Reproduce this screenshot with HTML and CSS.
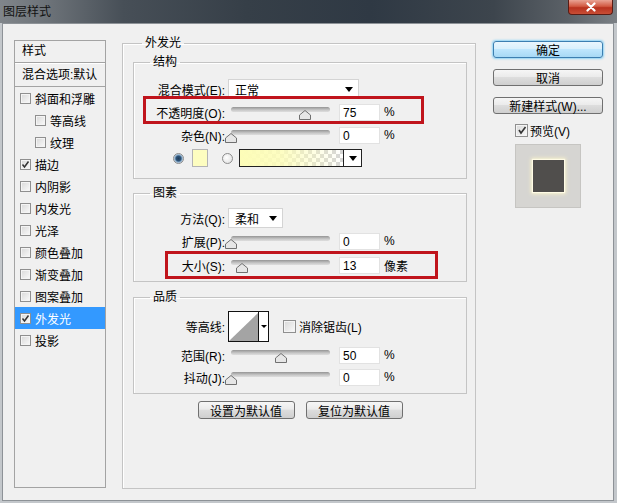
FILE: index.html
```html
<!DOCTYPE html>
<html>
  <head>
    <meta charset="UTF-8" />
    <title>图层样式</title>
    <link rel="stylesheet" href="styles.css">
  </head>
  <body>
    <div class="window">
      <div class="titlebar">
        <span class="title">图层样式</span>
        <div class="close">
          <svg width="14" height="10" viewBox="0 0 14 10"><path d="M3.5 1.5 L10.5 8.5 M10.5 1.5 L3.5 8.5" stroke="#fff" stroke-width="2.2" stroke-linecap="round"/></svg>
        </div>
      </div>
      <div class="client">
        <div class="stylelist">
          <div class="list-head">样式</div>
          <div class="list-head blend">混合选项:默认</div>
          <div class="item"><span class="cb"></span>斜面和浮雕</div>
          <div class="item sub"><span class="cb"></span>等高线</div>
          <div class="item sub"><span class="cb"></span>纹理</div>
          <div class="item"><span class="cb"><svg width="9" height="9" viewBox="0 0 9 9"><path d="M1.5 4.5 L3.5 7 L7.5 1.5" fill="none" stroke="#333" stroke-width="1.5"/></svg></span>描边</div>
          <div class="item"><span class="cb"></span>内阴影</div>
          <div class="item"><span class="cb"></span>内发光</div>
          <div class="item"><span class="cb"></span>光泽</div>
          <div class="item"><span class="cb"></span>颜色叠加</div>
          <div class="item"><span class="cb"></span>渐变叠加</div>
          <div class="item"><span class="cb"></span>图案叠加</div>
          <div class="item selected"><span class="cb"><svg width="9" height="9" viewBox="0 0 9 9"><path d="M1.5 4.5 L3.5 7 L7.5 1.5" fill="none" stroke="#333" stroke-width="1.5"/></svg></span>外发光</div>
          <div class="item"><span class="cb"></span>投影</div>
        </div>

        <fieldset class="group main">
          <legend>外发光</legend>
          <div class="main-body">
            <fieldset class="group structure">
              <legend>结构</legend>
              <div class="group-body">
                <div class="row r22">
                  <span class="lbl">混合模式(E):</span>
                  <div class="select wide"><span>正常</span><span class="arrow"></span></div>
                </div>
                <div class="row">
                  <span class="lbl">不透明度(O):</span>
                  <div class="slider"><div class="track"></div><svg class="thumb" style="left:71px" width="12" height="10" viewBox="0 0 12 10"><path d="M0.5 9.5 V5 L6 0.5 L11.5 5 V9.5 Z" fill="#e6e6e6" stroke="#707070"/></svg></div>
                  <span class="num">75</span><span class="unit">%</span>
                </div>
                <div class="row r22">
                  <span class="lbl">杂色(N):</span>
                  <div class="slider"><div class="track"></div><svg class="thumb" style="left:-3px" width="12" height="10" viewBox="0 0 12 10"><path d="M0.5 9.5 V5 L6 0.5 L11.5 5 V9.5 Z" fill="#e6e6e6" stroke="#707070"/></svg></div>
                  <span class="num">0</span><span class="unit">%</span>
                </div>
                <div class="row colors">
                  <span class="radio on"></span>
                  <span class="swatch"></span>
                  <span class="radio second"></span>
                  <div class="gradient-pick"><span class="gradient"></span><span class="drop"><span class="arrow"></span></span></div>
                </div>
                <div class="mark mark-opacity"></div>
              </div>
            </fieldset>

            <fieldset class="group element">
              <legend>图素</legend>
              <div class="group-body">
                <div class="row r22">
                  <span class="lbl">方法(Q):</span>
                  <div class="select small"><span>柔和</span><span class="arrow"></span></div>
                </div>
                <div class="row">
                  <span class="lbl">扩展(P):</span>
                  <div class="slider"><div class="track"></div><svg class="thumb" style="left:-3px" width="12" height="10" viewBox="0 0 12 10"><path d="M0.5 9.5 V5 L6 0.5 L11.5 5 V9.5 Z" fill="#e6e6e6" stroke="#707070"/></svg></div>
                  <span class="num">0</span><span class="unit">%</span>
                </div>
                <div class="row">
                  <span class="lbl">大小(S):</span>
                  <div class="slider"><div class="track"></div><svg class="thumb" style="left:8px" width="12" height="10" viewBox="0 0 12 10"><path d="M0.5 9.5 V5 L6 0.5 L11.5 5 V9.5 Z" fill="#e6e6e6" stroke="#707070"/></svg></div>
                  <span class="num">13</span><span class="unit">像素</span>
                </div>
                <div class="mark mark-size"></div>
              </div>
            </fieldset>

            <fieldset class="group quality">
              <legend>品质</legend>
              <div class="group-body">
                <div class="row r35">
                  <span class="lbl">等高线:</span>
                  <div class="contour">
                    <span class="contour-img"><svg width="29" height="28" viewBox="0 0 29 28"><path d="M0 28 L29 0 L29 28 Z" fill="#a4a4a4"/></svg></span>
                    <span class="contour-drop"><span class="arrow tiny"></span></span>
                  </div>
                  <span class="cb big"></span><span class="cb-text">消除锯齿(L)</span>
                </div>
                <div class="row r22">
                  <span class="lbl">范围(R):</span>
                  <div class="slider"><div class="track"></div><svg class="thumb" style="left:47px" width="12" height="10" viewBox="0 0 12 10"><path d="M0.5 9.5 V5 L6 0.5 L11.5 5 V9.5 Z" fill="#e6e6e6" stroke="#707070"/></svg></div>
                  <span class="num">50</span><span class="unit">%</span>
                </div>
                <div class="row r22">
                  <span class="lbl">抖动(J):</span>
                  <div class="slider"><div class="track"></div><svg class="thumb" style="left:-3px" width="12" height="10" viewBox="0 0 12 10"><path d="M0.5 9.5 V5 L6 0.5 L11.5 5 V9.5 Z" fill="#e6e6e6" stroke="#707070"/></svg></div>
                  <span class="num">0</span><span class="unit">%</span>
                </div>
              </div>
            </fieldset>

            <div class="defaults">
              <div class="btn">设置为默认值</div>
              <div class="btn">复位为默认值</div>
            </div>
          </div>
        </fieldset>

        <div class="side">
          <div class="btn default">确定</div>
          <div class="btn">取消</div>
          <div class="btn">新建样式(W)...</div>
          <div class="preview-check">
            <span class="cb big"><svg width="10" height="10" viewBox="0 0 10 10"><path d="M2 5 L4 8 L8.5 2" fill="none" stroke="#333" stroke-width="1.6"/></svg></span>
            <span>预览(V)</span>
          </div>
          <div class="preview-box"><div class="preview-swatch"></div></div>
        </div>
      </div>
    </div>
  </body>
</html>
```

FILE: styles.css
```css
* {
  box-sizing: border-box;
}

body {
  margin: 0;
  font-family: "Liberation Sans", "Noto Sans CJK SC", sans-serif;
  font-size: 12px;
  color: #000;
  background: #c6cacd;
}

.window {
  width: 617px;
  height: 503px;
  background: #c3c7cb;
}

.titlebar {
  height: 23px;
  display: flex;
  justify-content: space-between;
  align-items: flex-start;
  background: linear-gradient(to right, #80858a 0, #6c7278 8%, #474f57 20%, #363f48 40%, #2f3944 60%, #3d454d 80%, #5b6167 92%, #7b8085 100%);
}

.title {
  padding-left: 3px;
  line-height: 24px;
  color: #111;
}

.close {
  width: 45px;
  height: 15px;
  margin-right: 4px;
  display: flex;
  justify-content: center;
  align-items: center;
  border: 1px solid #5a1c14;
  border-top: none;
  border-radius: 0 0 4px 4px;
  background: linear-gradient(#e9a394, #d25a43 45%, #b8321f 55%, #c84e36);
}

.client {
  margin-left: 2px;
  width: 612px;
  height: 478px;
  display: flex;
  align-items: flex-start;
  padding-left: 11px;
  border: 1px solid #8d9297;
  background: #f0f0f0;
}

/* left list */
.stylelist {
  width: 92px;
  height: 448px;
  margin-top: 16px;
  border: 1px solid #a3a3a3;
  background: #f0f0f0;
}

.list-head {
  height: 22px;
  line-height: 21px;
  padding-left: 7px;
  border-bottom: 1px solid #a3a3a3;
}

.list-head.blend {
  height: 24px;
  line-height: 22px;
  border-top: 1px solid #fff;
  white-space: nowrap;
  overflow: hidden;
}

.item {
  height: 22px;
  display: flex;
  align-items: center;
  padding-left: 5px;
}

.item.sub {
  padding-left: 20px;
}

.item.selected {
  background: #3399ff;
  color: #fff;
}

.cb {
  width: 11px;
  height: 11px;
  margin-right: 4px;
  flex: none;
  display: flex;
  justify-content: center;
  align-items: center;
  border: 1px solid #8f8f8f;
  background: linear-gradient(135deg, #d8d8d8, #fafafa);
  box-shadow: inset 0 0 0 1px #f4f4f4;
}

.cb.big {
  width: 13px;
  height: 13px;
}

/* group boxes */
fieldset.group {
  margin: 0;
  padding: 0;
  min-width: 0;
  border: 1px solid #c4c4c4;
  box-shadow: 1px 1px 0 #fff inset;
}

.group legend {
  margin-left: 16px;
  padding: 0 3px;
  line-height: 14px;
}

fieldset.main {
  width: 354px;
  height: 453px;
  margin-left: 16px;
  margin-top: 12px;
}

.main > legend {
  margin-left: 19px;
}

.main-body {
  padding: 5px 8px 0 10px;
}

.group-body {
  position: relative;
  padding: 9px 0 8px 0;
}

fieldset.element {
  margin-top: 7px;
}

.element .group-body {
  padding: 7px 0 4px 0;
}

fieldset.quality {
  margin-top: 8px;
}

.quality .group-body {
  padding: 5px 0 5px 0;
}

.row {
  height: 24px;
  display: flex;
  align-items: center;
}

.row.r22 {
  height: 22px;
}

.row.r35 {
  height: 35px;
}

.lbl {
  width: 91px;
  margin-right: 3px;
  flex: none;
  text-align: right;
  white-space: nowrap;
}

.select {
  height: 20px;
  display: flex;
  align-items: center;
  justify-content: space-between;
  padding: 0 5px 0 6px;
  background: #fff;
  border: 1px solid #d4d4d4;
}

.select.wide {
  width: 131px;
}

.select.small {
  width: 55px;
}

.arrow {
  width: 0;
  height: 0;
  border-left: 4px solid transparent;
  border-right: 4px solid transparent;
  border-top: 5px solid #000;
}

.arrow.tiny {
  border-left-width: 3px;
  border-right-width: 3px;
  border-top-width: 3px;
}

.slider {
  position: relative;
  width: 102px;
  height: 16px;
  flex: none;
}

.track {
  margin: 3px 0 0 3px;
  height: 5px;
  border-radius: 3px;
  background: linear-gradient(#959595, #c8c8c8 60%, #dedede);
}

.thumb {
  position: absolute;
  top: 6px;
}

.num {
  width: 41px;
  height: 17px;
  margin-left: 9px;
  padding-left: 3px;
  line-height: 16px;
  background: #fff;
  border: 1px solid #e2e2e2;
}

.unit {
  margin-left: 4px;
}

.colors {
  padding-left: 39px;
}

.radio {
  width: 11px;
  height: 11px;
  flex: none;
  border-radius: 50%;
  border: 1px solid #8c8c8c;
  background: radial-gradient(circle at 40% 40%, #fff, #dcdcdc);
}

.radio.on {
  background: radial-gradient(circle, #203c5a 0, #2d5378 2.5px, #7fa3c4 3.5px, #e4ebf1 5px);
}

.radio.second {
  margin-left: 14px;
}

.swatch {
  width: 16px;
  height: 18px;
  margin-left: 8px;
  background: #fdfdc0;
  border: 1px solid #b4b4b4;
}

.gradient-pick {
  width: 123px;
  height: 18px;
  margin-left: 6px;
  display: flex;
  border: 1px solid #222;
}

.gradient {
  flex: 1;
  background:
    linear-gradient(to right, #fdfdb8 0, rgba(253, 253, 184, 0.85) 40%, rgba(253, 253, 184, 0) 100%),
    repeating-conic-gradient(#d6d6d6 0 25%, #fff 0 50%) 0 0 / 8px 8px;
}

.drop {
  width: 18px;
  display: flex;
  justify-content: center;
  align-items: center;
  border-left: 1px solid #222;
  background: #fff;
}

.contour {
  width: 41px;
  height: 31px;
  display: flex;
  background: #fff;
  border: 1px solid #111;
}

.contour-img {
  width: 30px;
  display: flex;
  align-items: flex-end;
  border-right: 1px solid #111;
}

.contour-drop {
  flex: 1;
  display: flex;
  justify-content: center;
  align-items: center;
}

.quality .cb.big {
  margin-left: 14px;
  margin-right: 3px;
}

/* red annotation frames */
.mark {
  position: absolute;
  border: 3px solid #c0141c;
}

.mark-opacity {
  left: 9px;
  top: 27px;
  width: 281px;
  height: 28px;
}

.mark-size {
  left: 31px;
  top: 51px;
  width: 273px;
  height: 28px;
}

.defaults {
  margin-top: 7px;
  display: flex;
  justify-content: center;
  gap: 11px;
}

.defaults .btn {
  width: 97px;
  height: 18px;
}

.btn {
  height: 17px;
  display: flex;
  justify-content: center;
  align-items: center;
  border: 1px solid #707070;
  border-radius: 3px;
  background: linear-gradient(#f6f6f6, #ebebeb 45%, #dddddd 50%, #cfcfcf);
  white-space: nowrap;
}

/* right column */
.side {
  width: 110px;
  margin-left: 17px;
  margin-top: 17px;
}

.side .btn {
  margin-bottom: 11px;
}

.side .btn:nth-child(3) {
  margin-bottom: 0;
}

.btn.default {
  border-color: #3c7fb1;
  background: linear-gradient(#eaf6fd, #d9f0fc 45%, #bee6fd 50%, #a7d9f5);
  box-shadow: 0 0 2px 1px #8fd3f5;
}

.preview-check {
  height: 18px;
  margin-top: 7px;
  padding-left: 22px;
  display: flex;
  align-items: center;
}

.preview-check .cb {
  margin-right: 2px;
}

.preview-box {
  width: 66px;
  height: 64px;
  margin: 5px 0 0 22px;
  display: flex;
  justify-content: center;
  align-items: center;
  background: #d6d5d2;
  border: 1px solid #c6c5c2;
}

.preview-swatch {
  width: 31px;
  height: 32px;
  background: #504e4c;
  box-shadow: 0 0 1px 1px #fffbe6, 0 0 4px 2px rgba(255, 248, 200, 0.8);
}
```
